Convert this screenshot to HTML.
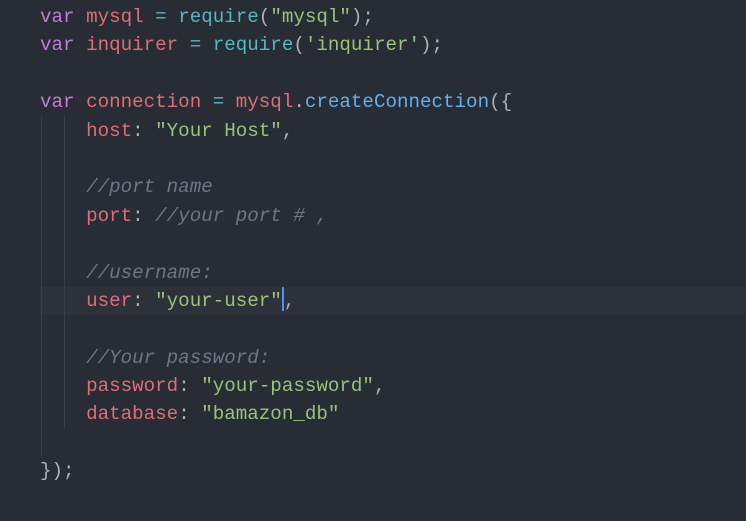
<!DOCTYPE html>
<html><head><style>
html,body{margin:0;padding:0;background:#282c34;width:746px;height:521px;overflow:hidden}
.code{position:absolute;top:3px;left:0;width:746px;font-family:"Liberation Mono",monospace;font-size:19.2px;line-height:28.4px;color:#abb2bf}
.l{height:28.4px;padding-left:40px;white-space:pre;position:relative}
.cur{background:#2c313a;margin-left:40px;padding-left:0}
.k{color:#c678dd}.v{color:#e06c75}.f{color:#61afef}.s{color:#98c379}.c{color:#6f7683;font-style:italic}.o{color:#56b6c2}
.g{position:absolute;width:1px;background:#3b4048;z-index:2}
.caret{display:inline-block;width:2px;height:24px;background:#528bff;vertical-align:middle;margin-top:-4px}
</style></head><body>
<div class="g" style="left:41px;top:116px;height:340px"></div>
<div class="g" style="left:64px;top:116px;height:312px"></div>
<div class="code">
<div class="l"><span class="k">var</span> <span class="v">mysql</span> <span class="o">=</span> <span class="o">require</span>(<span class="s">"mysql"</span>);</div>
<div class="l"><span class="k">var</span> <span class="v">inquirer</span> <span class="o">=</span> <span class="o">require</span>(<span class="s">'inquirer'</span>);</div>
<div class="l"></div>
<div class="l"><span class="k">var</span> <span class="v">connection</span> <span class="o">=</span> <span class="v">mysql</span>.<span class="f">createConnection</span>({</div>
<div class="l">    <span class="v">host</span>: <span class="s">"Your Host"</span>,</div>
<div class="l"></div>
<div class="l">    <span class="c">//port name</span></div>
<div class="l">    <span class="v">port</span>: <span class="c">//your port # ,</span></div>
<div class="l"></div>
<div class="l">    <span class="c">//username:</span></div>
<div class="l cur">    <span class="v">user</span>: <span class="s">"your-user"</span><span class="caret"></span>,</div>
<div class="l"></div>
<div class="l">    <span class="c">//Your password:</span></div>
<div class="l">    <span class="v">password</span>: <span class="s">"your-password"</span>,</div>
<div class="l">    <span class="v">database</span>: <span class="s">"bamazon_db"</span></div>
<div class="l"></div>
<div class="l">});</div>
</div>
</body></html>
